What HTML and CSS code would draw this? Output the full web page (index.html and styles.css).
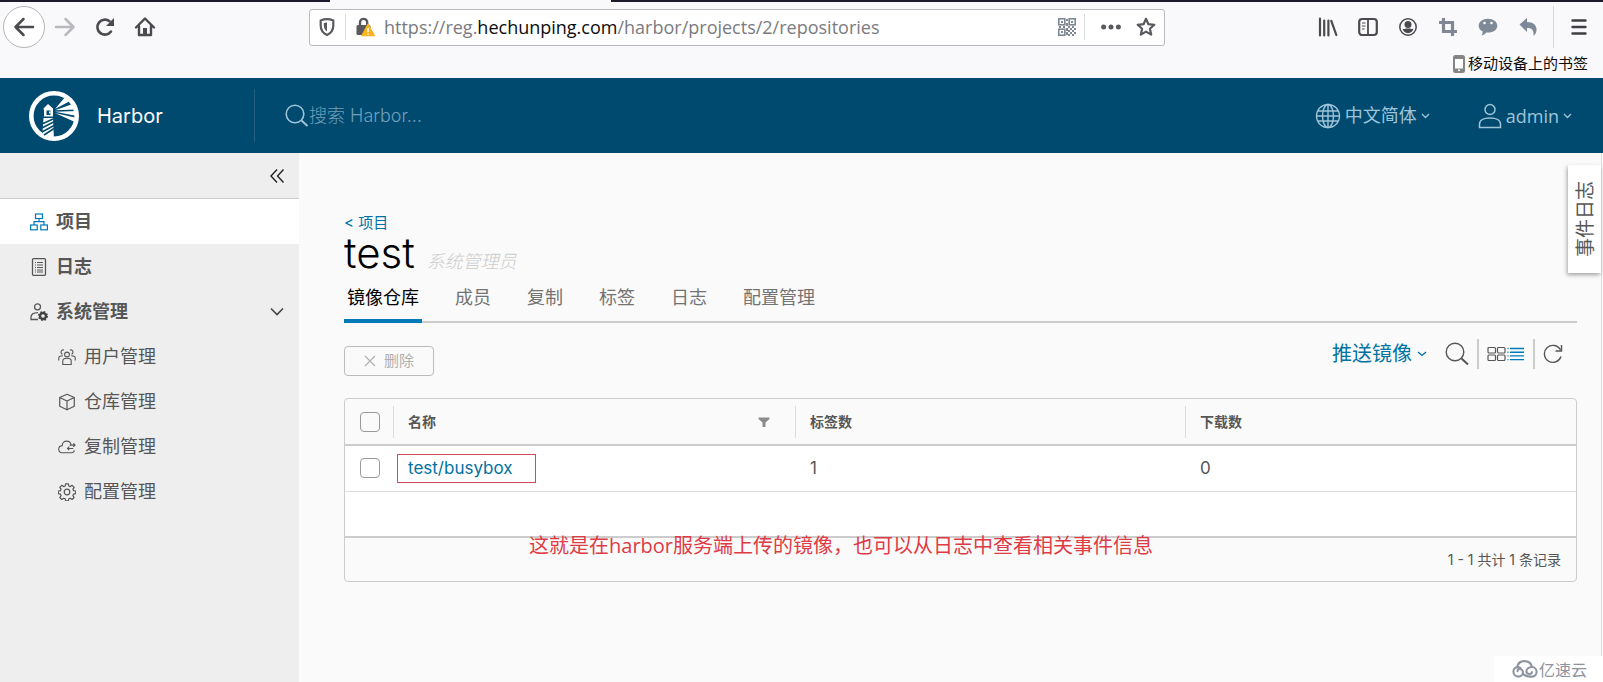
FILE: index.html
```html
<!DOCTYPE html>
<html lang="zh-CN">
<head>
<meta charset="utf-8">
<meta name="viewport" content="width=device-width, initial-scale=1">
<title>Harbor</title>
<link rel="stylesheet" href="styles.css">
</head>
<body>
<div class="window">
  <div class="tabstrip"><span class="tabstrip-active"></span></div>

  <div class="browser">
    <div class="browser-nav">
      <button class="tool back" aria-label="后退"><svg width="22" height="22" viewBox="0 0 22 22"><path d="M20 11H3M10.500 3L2.500 11l8 8" fill="none" stroke="#4a4a4f" stroke-width="2.500" stroke-linecap="round" stroke-linejoin="round"/></svg></button>
      <button class="tool" aria-label="前进"><svg width="22" height="22" viewBox="0 0 22 22"><path d="M2 11h17M11.500 3l8 8-8 8" fill="none" stroke="#b9b9bd" stroke-width="2.500" stroke-linecap="round" stroke-linejoin="round"/></svg></button>
      <button class="tool" aria-label="刷新"><svg width="22" height="22" viewBox="0 0 22 22"><path d="M15.500 5.200A7.500 7.500 0 1 0 17 15.500" fill="none" stroke="#4a4a4f" stroke-width="2.600" stroke-linecap="round"/><path d="M20 2v8h-8z" fill="#4a4a4f"/></svg></button>
      <button class="tool" aria-label="主页"><svg width="22" height="22" viewBox="0 0 22 22"><path d="M2 11.500L11 2.500l9 9M5 10v9h12v-9" fill="none" stroke="#4a4a4f" stroke-width="2.400" stroke-linecap="round" stroke-linejoin="round"/><path d="M9 12h4v7H9z" fill="#4a4a4f"/></svg></button>
    </div>
    <div class="urlbar">
      <svg class="shield" width="18" height="20" viewBox="0 0 18 20"><path d="M9 2.200c2.400 0 4.600.5 6.300 1.200v5c0 4.400-2.300 7.600-6.300 9.500-4-1.900-6.300-5.100-6.300-9.500v-5C4.400 2.700 6.600 2.200 9 2.200z" fill="none" stroke="#5a5a5e" stroke-width="2.200"/><path d="M9 5.500v9c-2-1.400-3.200-3.400-3.200-6V6z" fill="#5a5a5e"/></svg>
      <span class="url-sep"></span>
      <svg class="lock" width="20" height="20" viewBox="0 0 20 20"><path d="M5 9V5.500a3.600 3.600 0 0 1 7.200 0V9" fill="none" stroke="#5a5a5e" stroke-width="2.400"/><rect x="1.500" y="8" width="14" height="10" rx="1.500" fill="#5a5a5e"/><path d="M13 7.500L19.200 18.600H7z" fill="#ffb31a" stroke="#ffb31a" stroke-width="1.500" stroke-linejoin="round"/><path d="M13 11v4M13 16.500v1.500" stroke="#fff" stroke-width="1.600"/></svg>
      <div class="url" role="textbox" aria-label="地址">https://reg.<span class="url-host">hechunping.com</span>/harbor/projects/2/repositories</div>
      <button class="tool small" aria-label="二维码"><svg width="18" height="18" viewBox="0 0 18 18"><g fill="none" stroke="#7f8794" stroke-width="1.600"><rect x=".8" y=".8" width="6" height="6"/><rect x="11.200" y=".8" width="6" height="6"/><rect x=".8" y="11.200" width="6" height="6"/></g><g fill="#7f8794"><path d="M3 3h2v2H3zM13 3h2v2h-2zM3 13h2v2H3zM8 1h2v2H8zM8 5h2v3H8zM1 8h2v2H1zM5 8h2v2H5zM10 8h2v2h-2zM14 8h2v2h-2zM8 10h2v3H8zM12 10h2v2h-2zM16 10h2v2h-2zM10 12h2v2h-2zM14 12h2v2h-2zM8 14h2v3H8zM12 14h2v2h-2zM16 14h2v2h-2zM10 16h2v2h-2zM14 16h2v2h-2z"/></g></svg></button>
      <span class="url-sep"></span>
      <button class="tool small" aria-label="页面操作"><svg width="20" height="6" viewBox="0 0 20 6"><g fill="#5a5a5e"><circle cx="2.600" cy="3" r="2.500"/><circle cx="10" cy="3" r="2.500"/><circle cx="17.400" cy="3" r="2.500"/></g></svg></button>
      <button class="tool small" aria-label="添加书签"><svg width="20" height="20" viewBox="0 0 20 20"><path d="M10 1.800l2.400 5.400 5.900.6-4.400 3.900 1.300 5.900-5.200-3-5.200 3 1.300-5.900-4.400-3.900 5.900-.6z" fill="none" stroke="#5a5a5e" stroke-width="2.200" stroke-linejoin="round"/></svg></button>
    </div>
    <div class="browser-tools">
      <button class="tool small" aria-label="书库"><svg width="20" height="20" viewBox="0 0 20 20"><path d="M2 1.500v17M6.200 3.500v15M10.400 3.500v15M13.300 3.800l5 14.200" fill="none" stroke="#4a4a4f" stroke-width="2.200" stroke-linecap="round"/></svg></button>
      <button class="tool small" aria-label="侧栏"><svg width="20" height="20" viewBox="0 0 20 20"><rect x="1.200" y="2" width="17.600" height="16" rx="3" fill="none" stroke="#4a4a4f" stroke-width="2.200"/><path d="M10 2v16" stroke="#4a4a4f" stroke-width="1.800"/><path d="M4 6h3.500M4 9h3.500M4 12h2.500" stroke="#4a4a4f" stroke-width="1.200"/></svg></button>
      <button class="tool small" aria-label="账户"><svg width="20" height="20" viewBox="0 0 20 20"><circle cx="10" cy="10" r="8.200" fill="none" stroke="#4a4a4f" stroke-width="1.500"/><circle cx="10" cy="7.500" r="3.500" fill="#4a4a4f"/><path d="M4.500 11.800c1.700.3 2.600.2 3.500-.2h4c.9.400 1.800.5 3.500.2-.8 2.800-2.800 4.400-5.500 4.400s-4.700-1.600-5.500-4.400z" fill="#4a4a4f"/></svg></button>
      <button class="tool small" aria-label="截图"><svg width="20" height="20" viewBox="0 0 20 20"><path d="M5.500 1v13.500H19M1 5.500h13.500V19" fill="none" stroke="#7f8794" stroke-width="3.200"/></svg></button>
      <button class="tool small" aria-label="消息"><svg width="20" height="20" viewBox="0 0 20 20"><path d="M10 1.800c5.300 0 9.300 3 9.300 6.900s-4 6.900-9.300 6.900c-.6 0-1.200 0-1.800-.1-1 1.600-2.600 2.700-4.700 2.900.9-1.100 1.300-2.400 1.200-3.800C2.300 13.300.7 11.200.7 8.700c0-3.900 4-6.900 9.300-6.900z" fill="#7f8a99"/><circle cx="6.500" cy="6" r="1.300" fill="#fff"/><circle cx="13.500" cy="6" r="1.300" fill="#fff"/></svg></button>
      <button class="tool small" aria-label="撤销"><svg width="20" height="20" viewBox="0 0 20 20"><path d="M1.500 7.500L9 1v4c6.500 0 10 3.500 9.500 8.500-.2 2-1.200 4-3 5.500.6-5.500-1.300-8-6.500-8v4z" fill="#7f8a99"/></svg></button>
      <span class="tools-sep"></span>
      <button class="tool small" aria-label="菜单"><svg width="20" height="20" viewBox="0 0 20 20"><path d="M3.500 3.500h13M3.500 10h13M3.500 16.500h13" stroke="#3f3f43" stroke-width="2.400" stroke-linecap="round"/></svg></button>
    </div>
  </div>
  <div class="bookmarks">
    <a class="bookmark" href="#"><svg width="12" height="18" viewBox="0 0 12 18"><rect x="1" y="1" width="10" height="16" rx="1.500" fill="#fff" stroke="#858585" stroke-width="2"/><path d="M1 2.500h10M1 15h10" stroke="#858585" stroke-width="3"/><circle cx="6" cy="15.300" r="1" fill="#fff"/></svg>移动设备上的书签</a>
  </div>

  <header class="header">
    <a class="brand" href="#">
      <svg width="50" height="50" viewBox="0 0 50 50"><defs><clipPath id="disc"><circle cx="25" cy="25" r="23"/></clipPath></defs><circle cx="25" cy="25" r="22.700" fill="none" stroke="#fff" stroke-width="4.600"/><g clip-path="url(#disc)" fill="#fff"><path d="M26 18L37 5l5 4.500zM26 19.300l19-6.800 2 6zM26 20.700l22-.7v5zM26 22l22 5-1 4.500z"/><path d="M19 13l5 4.500v1H14.500v-1z"/><path d="M15 18h9v7.500h-9z"/><path d="M14.500 27h9.500l1 22H13z"/></g><path d="M17.500 19.500h4v4.500h-4z" fill="#004a70"/><path d="M20 20.500h1.500v2H20z" fill="#fff"/><path d="M13 33l11-5M13 37l11.500-6M13 41l12-6.500M15 44l10-6.500" stroke="#004a70" stroke-width="1.500"/></svg>
      <span>Harbor</span>
    </a>
    <label class="search">
      <svg width="24" height="24" viewBox="0 0 24 24"><circle cx="10" cy="10" r="8.800" fill="none" stroke="#9fc4d8" stroke-width="1.600"/><path d="M16.500 16.500L22.500 22" stroke="#9fc4d8" stroke-width="2"/></svg>
      <input class="search-input" type="text" placeholder="搜索 Harbor..." aria-label="搜索 Harbor">
    </label>
    <div class="header-actions">
      <button class="menu-button"><svg width="26" height="26" viewBox="0 0 26 26"><g fill="none" stroke="#9fc4d8" stroke-width="1.400"><circle cx="13" cy="13" r="11.500"/><ellipse cx="13" cy="13" rx="5.500" ry="11.500"/><path d="M13 1.500v23M1.500 13h23M3 8h20M3 18h20"/></g></svg><span>中文简体</span><svg class="caret" width="9" height="6" viewBox="0 0 9 6"><path d="M1 1l3.500 3.500L8 1" fill="none" stroke="#9fc4d8" stroke-width="1.300"/></svg></button>
      <button class="menu-button"><svg width="24" height="26" viewBox="0 0 24 26"><g fill="none" stroke="#9fc4d8" stroke-width="1.500"><circle cx="12" cy="6.500" r="5"/><path d="M1.500 24.500V21c0-3.500 4-6 10.500-6s10.500 2.500 10.500 6v3.500z"/></g></svg><span class="user">admin</span><svg class="caret" width="9" height="6" viewBox="0 0 9 6"><path d="M1 1l3.500 3.500L8 1" fill="none" stroke="#9fc4d8" stroke-width="1.300"/></svg></button>
    </div>
  </header>

  <div class="body">
    <nav class="sidebar">
      <div class="collapse"><button class="tool" aria-label="收起"><svg width="16" height="16" viewBox="0 0 16 16"><path d="M8 1.500L2 8l6 6.500M14.500 1.500L8.500 8l6 6.500" fill="none" stroke="#222" stroke-width="1.400"/></svg></button></div>
      <a class="item active" href="#"><svg width="18" height="18" viewBox="0 0 18 18"><g fill="none" stroke="#0079b8" stroke-width="1.200"><rect x="5.500" y="1" width="7" height="4.500"/><rect x=".6" y="12" width="6.600" height="4.800"/><rect x="10.800" y="12" width="6.600" height="4.800"/><path d="M9 5.500v3M4 12V8.700h10V12"/></g></svg>项目</a>
      <a class="item" href="#"><svg width="18" height="18" viewBox="0 0 18 18"><rect x="2.500" y=".7" width="13" height="16.600" rx="1" fill="none" stroke="#565656" stroke-width="1.300"/><path d="M5 4.500h1M7 4.500h6M5 7h1M7 7h6M5 9.500h1M7 9.500h6M5 12h1M7 12h6M5 14h1M7 14h6" stroke="#565656"/></svg>日志</a>
      <a class="item" href="#"><svg width="18" height="18" viewBox="0 0 18 18"><g fill="none" stroke="#565656" stroke-width="1.300"><circle cx="7.500" cy="3.800" r="3"/><path d="M8 16.500H1V14c0-2.500 2.500-4.300 7-4.400"/></g><circle cx="13" cy="13" r="3" fill="none" stroke="#444" stroke-width="2.400"/><circle cx="13" cy="13" r="4.300" fill="none" stroke="#444" stroke-width="1.400" stroke-dasharray="1.700 1.700"/></svg>系统管理<svg class="item-caret" width="16" height="10" viewBox="0 0 16 10"><path d="M2 1.500l6 6 6-6" fill="none" stroke="#444" stroke-width="1.600"/></svg></a>
      <a class="item sub" href="#"><svg width="18" height="18" viewBox="0 0 18 18"><g fill="none" stroke="#565656" stroke-width="1.100"><circle cx="9" cy="6.500" r="2.400"/><path d="M4.800 16.500V13c0-1.700 1.300-2.700 4.200-2.700s4.200 1 4.200 2.700v3.500zM6 2a2.200 2.200 0 1 0-1.500 4.200M12 2a2.200 2.200 0 1 1 1.500 4.200M.8 12.500V10c0-1.500 1.300-2.200 4-2.200M17.200 12.500V10c0-1.500-1.300-2.200-4-2.200"/></g></svg>用户管理</a>
      <a class="item sub" href="#"><svg width="18" height="18" viewBox="0 0 18 18"><path d="M9 1.200l7.300 3.300v8.800L9 16.800l-7.300-3.500V4.500zM1.700 4.500L9 8l7.300-3.500M9 8v8.800" fill="none" stroke="#565656" stroke-width="1.200" stroke-linejoin="round"/></svg>仓库管理</a>
      <a class="item sub" href="#"><svg width="20" height="18" viewBox="0 0 20 18"><path d="M14.500 6.500C14 3.800 12 2.500 9.600 2.500 6.700 2.500 4.700 4.600 4.700 7.500 2.300 7.800.8 9.300.8 11.500c0 2.400 1.700 3.900 4 3.900h10c1.800 0 3.200-1 3.400-2.800M19 6.900h-6M17 4.900l2 2-2 2M10.500 10.600H17M12.500 8.600l-2 2 2 2" fill="none" stroke="#565656" stroke-width="1.200"/></svg>复制管理</a>
      <a class="item sub" href="#"><svg width="18" height="18" viewBox="0 0 18 18"><g fill="none" stroke="#565656" stroke-width="1.200" stroke-linejoin="round"><circle cx="9" cy="9" r="2.800"/><path d="M7.600.8h2.800l.4 2.200 1.500.6 1.900-1.300 2 2-1.300 1.900.6 1.400 2.200.4v2.700l-2.200.5-.6 1.400 1.200 1.900-2 2-1.800-1.300-1.500.6-.4 2.100H7.600l-.4-2.100-1.500-.6-1.900 1.300-2-2 1.300-1.900-.6-1.400-2.200-.5V8l2.200-.4.6-1.400-1.300-1.900 2-2L5.700 3.600 7.200 3z"/></g></svg>配置管理</a>
    </nav>

    <main class="content">
      <a class="crumb" href="#">&lt; 项目</a>
      <h1 class="title">test <em class="role">系统管理员</em></h1>
      <div class="tabs" role="tablist">
        <button class="tab selected" role="tab" aria-selected="true">镜像仓库</button>
        <button class="tab" role="tab">成员</button>
        <button class="tab" role="tab">复制</button>
        <button class="tab" role="tab">标签</button>
        <button class="tab" role="tab">日志</button>
        <button class="tab" role="tab">配置管理</button>
      </div>
      <div class="toolbar">
        <button class="delete" disabled><svg width="12" height="12" viewBox="0 0 12 12"><path d="M1 1l10 10M11 1L1 11" stroke="#b0b0b0" stroke-width="1.200"/></svg>删除</button>
        <div class="toolbar-right">
          <button class="push">推送镜像<svg width="10" height="6" viewBox="0 0 10 6"><path d="M1 1l4 3.500L9 1" fill="none" stroke="#0072a3" stroke-width="1.300"/></svg></button>
          <button class="tool" aria-label="搜索"><svg width="24" height="24" viewBox="0 0 24 24"><circle cx="10" cy="10" r="8.800" fill="none" stroke="#565656" stroke-width="1.400"/><path d="M16.500 16.500L23 22.500" stroke="#565656" stroke-width="2"/></svg></button>
          <span class="bar"></span>
          <button class="tool view" aria-label="切换视图"><svg width="38" height="16" viewBox="0 0 38 16"><g fill="none" stroke="#565656" stroke-width="1.200"><rect x="1" y="1.500" width="7.500" height="5.500" rx="1"/><rect x="10.500" y="1.500" width="7.500" height="5.500" rx="1"/><rect x="1" y="9" width="7.500" height="5.500" rx="1"/><rect x="10.500" y="9" width="7.500" height="5.500" rx="1"/></g><path d="M20.500 2.500h1M23 2.500h14M20.500 6.200h1M23 6.200h14M20.500 9.900h1M23 9.900h14M20.500 13.600h1M23 13.600h14" stroke="#0079b8" stroke-width="1.400"/></svg></button>
          <span class="bar"></span>
          <button class="tool" aria-label="刷新列表"><svg width="20" height="20" viewBox="0 0 20 20"><path d="M18 12.500A8.500 8.500 0 1 1 17.500 6" fill="none" stroke="#565656" stroke-width="1.400"/><path d="M18.500 1v6h-6" fill="none" stroke="#565656" stroke-width="1.400"/></svg></button>
        </div>
      </div>

      <div class="datagrid">
        <table class="grid">
          <colgroup><col class="col-check"><col class="col-name"><col class="col-tags"><col></colgroup>
          <thead>
            <tr>
              <th class="check"><input class="box" type="checkbox" aria-label="全选"></th>
              <th><div class="head">名称<button class="tool filter" aria-label="过滤"><svg width="12" height="10" viewBox="0 0 12 10"><path d="M.5.500h11v1.500L7.500 5.500V10h-3V5.500L.5 2z" fill="#8c8c8c"/></svg></button></div></th>
              <th><div class="head">标签数</div></th>
              <th><div class="head">下载数</div></th>
            </tr>
          </thead>
          <tbody>
            <tr>
              <td class="check"><input class="box" type="checkbox" aria-label="选择 test/busybox"></td>
              <td class="name"><a class="repo" href="#">test/busybox</a></td>
              <td>1</td>
              <td>0</td>
            </tr>
          </tbody>
        </table>
        <div class="blank"></div>
        <div class="foot">1 - 1 共计 1 条记录</div>
        <p class="note">这就是在harbor服务端上传的镜像，也可以从日志中查看相关事件信息</p>
      </div>
    </main>
    <button class="eventlog"><span class="eventlog-text">事件日志</span></button>
    <div class="watermark"><svg width="26" height="20" viewBox="0 0 28 20"><g fill="none" stroke="#8e939f" stroke-width="2.200" stroke-linecap="round"><path d="M5.500 8.500C6 4 9 1.500 13.500 1.500c4 0 7 2.200 8 6"/><path d="M9 8.800C5 6.500 1.500 9 1.500 12.800c0 3 2.300 5.400 5.300 5.400s5-2.200 5-4.600c0-2-1.600-3.600-3.400-3.600-1.500 0-2.500 1-2.500 2.400"/><path d="M12 15c1.500 2.500 4 3.200 7.500 3.200h2c3 0 5-2.300 5-5.200s-2.200-5.200-5-5.200c-3.500 0-6 2.200-6 4.600 0 2 1.500 3 3.200 3s2.800-1 2.800-2.200"/></g></svg>亿速云</div>
  </div>
</div>
</body>
</html>
```
FILE: styles.css
```css
* { box-sizing: border-box; }

body {
  margin: 0;
  font-family: Inter, "Noto Sans CJK SC", sans-serif;
  color: #565656;
}

button {
  padding: 0;
  border: 0;
  background: none;
  font: inherit;
  color: inherit;
}

a { color: inherit; text-decoration: none; }
svg { display: block; flex: none; }

.window {
  min-height: 100vh;
  display: flex;
  flex-direction: column;
  background: #fafafa;
}

/* Browser chrome */
.tabstrip { height: 2px; padding-left: 330px; background: #1c1b2e; }
.tabstrip-active { display: block; width: 281px; height: 2px; background: #f9f9fb; }

.browser {
  display: flex;
  align-items: center;
  height: 50px;
  padding: 0 14px 0 3px;
  background: #f9f9fb;
}
.tool { display: flex; align-items: center; justify-content: center; }
.browser-nav { display: flex; align-items: center; gap: 18px; width: 306px; flex: none; }
.browser-nav .back { width: 42px; height: 42px; border: 1px solid #b5b5b9; border-radius: 50%; background: #fff; }
.browser-nav .back + .tool { margin-left: -9px; }

.urlbar {
  display: flex;
  align-items: center;
  flex: 1;
  height: 37px;
  padding: 0 8px;
  border: 1px solid #b9b9be;
  border-radius: 3px;
  background: #fff;
}
.url-sep { width: 1px; height: 26px; background: #d9dce2; }
.shield { margin-right: 9px; }
.lock { margin: 0 9px; }
.url {
  flex: 1;
  font-family: "Open Sans", sans-serif;
  font-size: 18px;
  line-height: 24px;
  color: #7b7b7f;
  white-space: nowrap;
}
.url-host { color: #0c0c0d; }
.urlbar .small { margin: 0 8px; }
.urlbar .url-sep + .small { margin: 0 7px 0 16px; }
.urlbar .small:last-child { margin-right: 0; }

.browser-tools { display: flex; align-items: center; gap: 20px; margin-left: 153px; }
.tools-sep { width: 1px; height: 42px; margin: 0 -5px; background: #d9d9dd; }

.bookmarks {
  display: flex;
  justify-content: flex-end;
  align-items: center;
  height: 26px;
  padding: 0 15px 2px 0;
  background: #f9f9fb;
}
.bookmark { display: flex; align-items: center; gap: 3px; font-size: 15px; line-height: 20px; color: #0c0c0d; }

/* Application header */
.header {
  display: flex;
  align-items: center;
  height: 75px;
  background: #004a70;
  color: #9fc4d8;
}
.brand {
  display: flex;
  align-items: center;
  gap: 18px;
  width: 255px;
  height: 53px;
  padding-left: 29px;
  border-right: 1px solid #245f80;
  font-size: 20px;
  color: #fff;
}
.search { display: flex; align-items: center; flex: 1; padding-left: 30px; }
.search-input {
  flex: 1;
  padding: 0;
  border: 0;
  outline: 0;
  background: none;
  font-family: inherit;
  font-size: 18px;
  font-weight: 300;
  line-height: 24px;
  color: #fff;
}
.search-input::placeholder { color: #6f9fb9; opacity: 1; }
.header-actions { display: flex; gap: 48px; padding-right: 31px; }
.menu-button { display: flex; align-items: center; gap: 4px; font-size: 18px; line-height: 24px; }
.user { font-family: "Open Sans", sans-serif; }

/* Sidebar */
.body { position: relative; display: flex; flex: 1; }
.sidebar { flex: none; width: 299px; background: #eee; }
.collapse {
  display: flex;
  justify-content: flex-end;
  align-items: center;
  height: 46px;
  padding-right: 14px;
  border-bottom: 1px solid #ccc;
}
.item {
  display: flex;
  align-items: center;
  gap: 8px;
  height: 45px;
  padding: 0 14px 0 30px;
  font-size: 18px;
  font-weight: 700;
  line-height: 24px;
}
.item.active { background: #fff; }
.item.sub { padding-left: 58px; font-weight: 400; }
.item.sub svg { width: 18px; }
.item-caret { margin-left: auto; }

/* Project page */
.content {
  flex: 1;
  min-width: 0;
  padding: 60px 24px 0 45px;
  border-right: 1px solid #ddd;
  margin-right: 1px;
}
.crumb { display: block; font-size: 15px; line-height: 20px; color: #0072a3; }
.title { margin: 0; font-size: 42px; font-weight: 300; line-height: 40px; color: #000; }
.role { font-size: 18px; font-style: italic; color: #ccc; }

.tabs { display: flex; gap: 30px; box-shadow: inset 0 -2px #ccc; }
.tab { height: 41px; padding: 0 3px 10px; font-size: 18px; line-height: 24px; color: #737373; }
.tab.selected { padding-bottom: 6px; border-bottom: 4px solid #0079b8; color: #000; }

.toolbar { display: flex; justify-content: space-between; align-items: center; height: 75px; }
.delete {
  display: flex;
  align-items: center;
  justify-content: center;
  gap: 8px;
  width: 90px;
  height: 30px;
  border: 1px solid #bbb;
  border-radius: 4px;
  font-size: 15px;
  line-height: 20px;
  color: #b0b0b0;
}
.toolbar-right { display: flex; align-items: center; padding: 0 14px 13px 0; }
.push { display: flex; align-items: center; gap: 5px; margin-right: 18px; font-size: 20px; line-height: 28px; color: #0072a3; }
.bar { width: 2px; height: 30px; margin: 0 8px; background: #ccc; }

.datagrid { position: relative; border: 1px solid #ccc; border-radius: 4px; }
.grid { width: 100%; table-layout: fixed; border-collapse: collapse; font-size: 17px; }
.col-check { width: 48px; }
.col-name { width: 402px; }
.col-tags { width: 390px; }
.grid th { height: 46px; padding: 0; border-bottom: 2px solid #ccc; text-align: left; font-size: 14px; line-height: 20px; }
.grid td { height: 46px; padding: 0 15px; border-bottom: 1px solid #ddd; background: #fff; }
.grid .check { padding: 0 0 0 15px; }
.grid .name { padding: 0 0 0 4px; }
.head {
  display: flex;
  align-items: center;
  justify-content: space-between;
  height: 32px;
  padding: 0 25px 0 14px;
  border-left: 1px solid #ddd;
}
.box {
  display: block;
  appearance: none;
  width: 20px;
  height: 20px;
  margin: 0;
  border: 1px solid #999;
  border-radius: 4px;
}
.repo {
  display: flex;
  align-items: center;
  width: 139px;
  height: 29px;
  padding-left: 10px;
  border: 1px solid #d04a5a;
  color: #0072a3;
}
.blank { height: 46px; background: #fff; border-bottom: 2px solid #ccc; }
.foot { padding: 11px 15px; text-align: right; font-size: 14px; line-height: 21px; }
.note {
  position: absolute;
  left: 184px;
  bottom: 21px;
  margin: 0;
  font-family: "Open Sans", "Noto Sans CJK SC", sans-serif;
  font-size: 20px;
  line-height: 28px;
  color: #e03a45;
  white-space: nowrap;
}

.eventlog {
  position: absolute;
  top: 12px;
  right: 2px;
  padding: 16px 4px 16px 6px;
  background: #fff;
  box-shadow: -1px 2px 4px rgba(0, 0, 0, .35);
}
.eventlog-text {
  display: block;
  writing-mode: vertical-rl;
  text-orientation: sideways;
  transform: rotate(180deg);
  font-size: 19px;
  line-height: 23px;
}

.watermark {
  position: absolute;
  right: 0;
  bottom: 0;
  display: flex;
  align-items: center;
  gap: 1px;
  height: 26px;
  padding: 0 16px 0 18px;
  background: #fff;
  font-size: 16px;
  color: #8e939f;
}
```
